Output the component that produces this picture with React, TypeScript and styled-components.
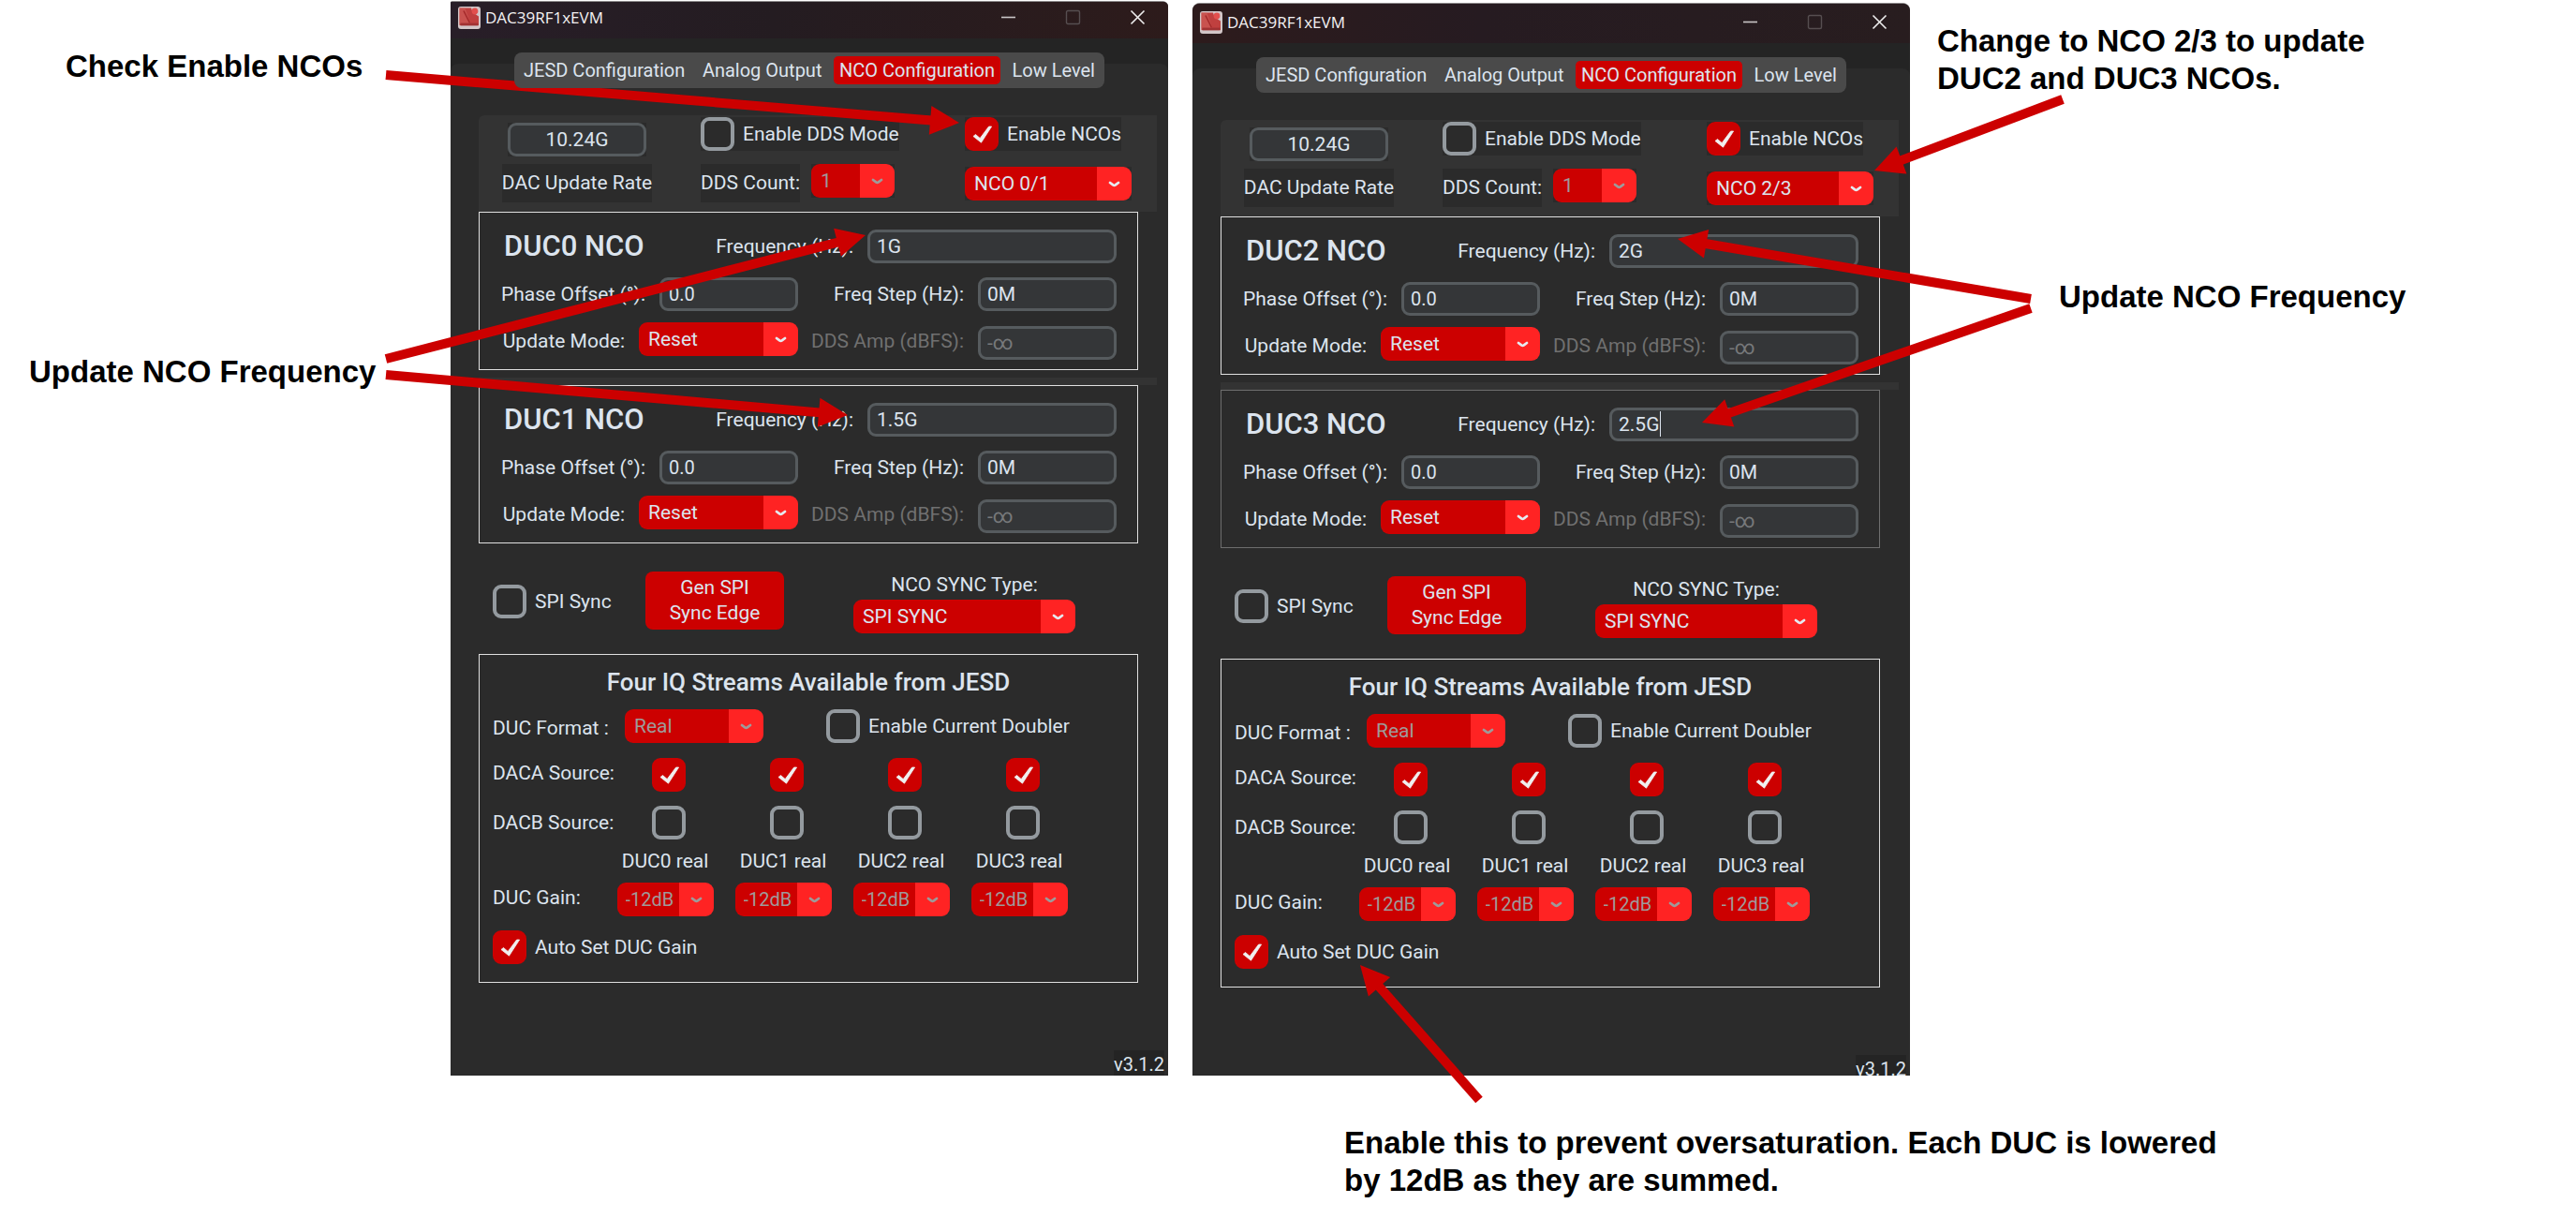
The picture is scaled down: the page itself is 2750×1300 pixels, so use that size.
import React, { useId, useState } from "react";
import styled, { createGlobalStyle, css } from "styled-components";

const colors = {
  root: "#242424",
  panel: "#2b2b2b",
  frame: "#333333",
  segmented: "#4a4a4a",
  text: "#dce4ee",
  dim: "#9f9a9a",
  red: "#cc0000",
  redLight: "#ff2323",
  field: "#343638",
  fieldBorder: "#565b5e",
  tick: "#949a9f",
};

const GlobalStyle = createGlobalStyle`
  *, *::before, *::after { box-sizing: border-box; }
  body { margin: 0; background: #ffffff; }
  input, select, button { font: inherit; color: inherit; margin: 0; }
`;

const Figure = styled.main`
  position: relative;
  display: flex;
  align-items: flex-start;
  min-width: 2500px;
  font-family: Roboto, "Liberation Sans", sans-serif;
  font-size: 21px;
  line-height: 24px;
  color: ${colors.text};
`;

/* ---------- notes ---------- */

const NoteColumn = styled.aside<{ $side: "left" | "right" }>`
  display: flex;
  flex-direction: column;
  ${(p) =>
    p.$side === "left"
      ? css`
          flex: 0 0 481px;
          padding: 51px 0 0 31px;
          gap: 286px;
        `
      : css`
          flex: 1;
          padding: 24px 0 0 29px;
          gap: 193px;
        `}
`;

const Note = styled.p<{ $indent?: number }>`
  margin: 0;
  margin-left: ${(p) => p.$indent ?? 0}px;
  font-family: "Liberation Sans", Arial, sans-serif;
  font-weight: 700;
  font-size: 33px;
  line-height: 40px;
  color: #000000;
  white-space: nowrap;
`;

const Arrows = styled.svg`
  position: absolute;
  top: 0;
  left: 0;
  pointer-events: none;
  overflow: visible;
`;

/* ---------- window ---------- */

const Stack = styled.div`
  display: flex;
  flex-direction: column;
  flex: 0 0 766px;
  padding-top: 1px;

  & + & {
    margin-left: 26px;
    padding-top: 3px;
  }
`;

const StackNote = styled.div`
  padding: 52px 0 0 162px;
  width: 0;
`;

const Window = styled.section<{ $offset: boolean }>`
  background: ${colors.root};
  border-top: 1px solid #8d8a8b;
  border-radius: ${(p) => (p.$offset ? "8px 8px 0 0" : "2px 6px 8px 8px")};
`;

const TitleBar = styled.header<{ $tall: boolean }>`
  display: flex;
  align-items: center;
  height: ${(p) => (p.$tall ? 42 : 39)}px;
  padding: 0 24px ${(p) => (p.$tall ? 3 : 6)}px 8px;
  border-radius: ${(p) => (p.$tall ? "7px 7px" : "1px 5px")} 0 0;
  background: ${(p) =>
    p.$tall
      ? "linear-gradient(90deg, #2d1b1c, #261b21 40%, #281d1f)"
      : "linear-gradient(90deg, #281e28, #241c21 45%, #2d1b1b)"};
`;

const Title = styled.h1`
  margin: 0 auto 0 5px;
  font-family: "Open Sans", "Noto Sans", sans-serif;
  font-weight: 400;
  font-size: 17px;
  line-height: 24px;
  color: #f3f1f2;
`;

const WindowButton = styled.button`
  display: block;
  width: 17px;
  height: 17px;
  margin-left: 52px;
  padding: 0;
  border: 0;
  background: none;

  svg {
    display: block;
  }
`;

const Body = styled.div<{ $short: boolean }>`
  display: flex;
  flex-direction: column;
  min-height: ${(p) => (p.$short ? 1102 : 1107)}px;
  padding-top: 15px;
`;

const Tabs = styled.nav`
  position: relative;
  z-index: 1;
  display: flex;
  justify-content: space-between;
  width: 630px;
  margin: 0 auto;
  padding: 4px;
  border-radius: 8px;
  background: ${colors.segmented};
`;

const Tab = styled.button<{ $active: boolean }>`
  height: 30px;
  padding: 0 6px;
  border: 0;
  border-radius: 5px;
  background: ${(p) => (p.$active ? colors.red : "transparent")};
  color: ${colors.text};
  font-size: 20px;
`;

const Panel = styled.div`
  flex: 1;
  margin-top: -26px;
  padding: 55px 12px 0 30px;
  border-radius: 8px 8px 0 0;
  background: ${colors.panel};
  display: flex;
  flex-direction: column;
`;

const TopFrame = styled.div`
  display: flex;
  height: 103px;
  padding: 2px 0 0 23px;
  border-radius: 6px 0 0 0;
  background: ${colors.frame};
`;

const TopColumn = styled.div<{ $width: number; $gap: number; $top?: number }>`
  display: flex;
  flex-direction: column;
  align-items: ${(p) => (p.$top ? "center" : "flex-start")};
  gap: ${(p) => p.$gap}px;
  flex: 0 0 ${(p) => p.$width}px;
  padding-top: ${(p) => p.$top ?? 0}px;

  & + & {
    margin-left: 50px;
  }
`;

const Plate = styled.div`
  display: flex;
  background: ${colors.panel};
`;

const Caption = styled.label<{ $dim?: boolean }>`
  white-space: nowrap;
  color: ${(p) => (p.$dim ? "#707070" : colors.text)};
`;

const PlateCaption = styled(Caption)`
  height: 41px;
  line-height: 41px;
  background: ${colors.panel};
`;

const DdsRow = styled.div`
  display: flex;
  align-items: flex-start;
  gap: 12px;
`;

const Field = styled.input<{ $width: number; $center?: boolean; $small?: boolean }>`
  display: block;
  width: ${(p) => p.$width}px;
  height: 36px;
  padding: 0 7px;
  border: 3px solid ${colors.fieldBorder};
  border-radius: 9px;
  outline: none;
  background: ${colors.field};
  text-align: ${(p) => (p.$center ? "center" : "left")};
  font-size: ${(p) => (p.$small ? 20 : 21)}px;

  &:disabled {
    color: #77797b;
    opacity: 1;
  }
`;

const FieldBox = styled.div`
  position: relative;
`;

const Caret = styled.span`
  position: absolute;
  top: 4px;
  left: 54px;
  width: 1px;
  height: 27px;
  background: ${colors.text};
`;

const SelectBox = styled.div<{ $width: number }>`
  display: grid;
  width: ${(p) => p.$width}px;

  > * {
    grid-area: 1 / 1;
  }

  > svg {
    align-self: center;
    justify-self: end;
    margin-right: 12px;
    pointer-events: none;
  }
`;

const NativeSelect = styled.select<{ $small: boolean }>`
  appearance: none;
  width: 100%;
  height: 36px;
  padding: 0 0 1px ${(p) => (p.$small ? 9 : 10)}px;
  border: 0;
  border-radius: 9px;
  outline: none;
  background: linear-gradient(
    90deg,
    ${colors.red} calc(100% - 37px),
    ${colors.redLight} calc(100% - 37px)
  );
  font-size: ${(p) => (p.$small ? 20 : 21)}px;

  &:disabled {
    color: ${colors.dim};
    opacity: 1;
  }
`;

const TickLabel = styled.label`
  display: inline-flex;
  align-items: center;
  gap: 9px;
  white-space: nowrap;
`;

const TickBox = styled.span`
  display: grid;
  width: 36px;
  height: 36px;

  > * {
    grid-area: 1 / 1;
  }

  > svg {
    pointer-events: none;
  }
`;

const TickInput = styled.input`
  appearance: none;
  width: 36px;
  height: 36px;
  border: 4px solid ${colors.tick};
  border-radius: 9px;

  &:checked {
    border-color: ${colors.red};
    background: ${colors.red};
  }
`;

const Box = styled.section<{ $faint?: boolean }>`
  margin-right: 20px;
  border: 1px solid ${(p) => (p.$faint ? "#6e6e6e" : "#e0e0e0")};
  background: ${colors.panel};
`;

const NcoBox = styled(Box)`
  display: flex;
  flex-direction: column;
  height: 169px;
  padding: 18px 22px 0 0;
`;

const NcoRow = styled.div<{ $top?: number }>`
  display: flex;
  justify-content: space-between;
  margin-top: ${(p) => p.$top ?? 0}px;
`;

const NcoTitle = styled.h2`
  margin: 0;
  padding-left: 26px;
  font-weight: 500;
  font-size: 31px;
  line-height: 36px;
`;

const Pair = styled.div<{ $align?: "start" | "end" }>`
  display: flex;
  justify-content: flex-end;
  align-items: center;
  gap: 15px;
  width: 340px;
  ${(p) => p.$align && `height: 40px; > :last-child { align-self: flex-${p.$align}; }`}
`;

const WidePair = styled(Pair)`
  width: auto;
`;

const Strip = styled.div`
  height: 8px;
  margin-top: 8px;
  background: ${colors.frame};
`;

const SyncRow = styled.div`
  display: flex;
  align-items: flex-start;
  height: 118px;
  padding: 30px 67px 0 15px;
`;

const SyncTick = styled.div`
  flex: 0 0 163px;
  padding-top: 14px;
`;

const ActionButton = styled.button`
  width: 148px;
  height: 62px;
  padding: 0;
  border: 0;
  border-radius: 8px;
  background: ${colors.red};
  line-height: 27px;
  white-space: pre-line;
`;

const SyncType = styled.div`
  display: flex;
  flex-direction: column;
  align-items: center;
  gap: 4px;
  margin: 0 20px 0 auto;
  padding-top: 2px;
`;

const StreamBox = styled(Box)`
  height: 351px;
  padding: 0 0 0 14px;
`;

const StreamTitle = styled.h2`
  margin: 0 14px 0 0;
  font-weight: 500;
  font-size: 26px;
  line-height: 58px;
  text-align: center;
`;

const FormatRow = styled.div`
  display: flex;
  align-items: center;
  height: 36px;
`;

const FormatLabel = styled.div`
  flex: 0 0 141px;
  padding-top: 4px;
`;

const FormatSelect = styled.div`
  flex: 0 0 215px;
`;

const SourceGrid = styled.div`
  display: grid;
  grid-template-columns: 121px repeat(4, 126px);
  grid-template-rows: 36px 15px 36px 46px 36px;
  margin: 16px 0 15px;
`;

const GridGap = styled.div`
  grid-column: 1 / -1;
`;

const RowLabel = styled.span<{ $raised?: boolean }>`
  align-self: center;
  padding-bottom: ${(p) => (p.$raised ? 5 : 0)}px;
  white-space: nowrap;
`;

const Cell = styled.div<{ $tick?: boolean }>`
  display: flex;
  justify-content: center;
  align-items: center;
  padding-left: ${(p) => (p.$tick ? 8 : 0)}px;
`;

const Version = styled.footer<{ $short: boolean }>`
  align-self: flex-end;
  height: ${(p) => (p.$short ? 22 : 27)}px;
  margin: auto -8px 0 0;
  font-size: 20px;
  line-height: 31px;
  background: ${colors.root};
`;

/* ---------- parts ---------- */

function AppIcon() {
  return (
    <svg width="24" height="24" viewBox="0 0 24 24" aria-hidden="true">
      <rect width="24" height="24" rx="3" fill="#d2c6c8" />
      <path d="M1.5 1.5h12.5l1.5 4.5 6.5 4.5V20H1.5z" fill="#c0403f" />
      <path d="M1.5 1.5h6l6 17H1.5z" fill="#d0605d" opacity="0.55" />
      <path d="M6 4.5l6.5 13" stroke="#a52a2b" strokeWidth="1.6" />
      <path d="M2.5 17.6h19v2.8h-19z" fill="#a13233" />
      <circle cx="18" cy="5" r="3.4" fill="#e2504e" />
    </svg>
  );
}

function Chevron({ dim }: { dim?: boolean }) {
  return (
    <svg width="13" height="7" viewBox="0 0 13 7" aria-hidden="true">
      <path
        d="M2 2 5.2 4.4Q6.5 5.2 7.8 4.4L11 2"
        fill="none"
        stroke={dim ? colors.dim : "#e6eaf0"}
        strokeWidth="2.8"
        strokeLinecap="round"
        strokeLinejoin="round"
      />
    </svg>
  );
}

interface SelectProps {
  id?: string;
  label?: string;
  width: number;
  options: string[];
  value?: string;
  disabled?: boolean;
  small?: boolean;
}

function Select({ id, label, width, options, value, disabled, small }: SelectProps) {
  return (
    <SelectBox $width={width}>
      <NativeSelect
        id={id}
        aria-label={label}
        defaultValue={value ?? options[0]}
        disabled={disabled}
        $small={!!small}
      >
        {options.map((o) => (
          <option key={o}>{o}</option>
        ))}
      </NativeSelect>
      <Chevron dim={disabled} />
    </SelectBox>
  );
}

function Tick({ text, label, initial = false }: { text?: string; label?: string; initial?: boolean }) {
  const [on, setOn] = useState(initial);
  return (
    <TickLabel>
      <TickBox>
        <TickInput
          type="checkbox"
          aria-label={label}
          checked={on}
          onChange={(e) => setOn(e.target.checked)}
        />
        {on && (
          <svg width="36" height="36" viewBox="0 0 36 36" aria-hidden="true">
            <path
              d="M9 20.5 11.5 18.5 16.2 22.6 25.6 10 28.6 10 17.5 27.2z"
              fill="#f0f0f0"
              stroke="#f0f0f0"
              strokeWidth="0.8"
              strokeLinejoin="round"
            />
          </svg>
        )}
      </TickBox>
      {text}
    </TickLabel>
  );
}

interface NcoProps {
  index: number;
  frequency: string;
  editing?: boolean;
  faint?: boolean;
}

function Nco({ index, frequency, editing, faint }: NcoProps) {
  const id = useId();
  return (
    <NcoBox $faint={faint}>
      <NcoRow>
        <NcoTitle>DUC{index} NCO</NcoTitle>
        <WidePair>
          <Caption htmlFor={id + "f"}>Frequency (Hz):</Caption>
          <FieldBox>
            <Field id={id + "f"} $width={266} defaultValue={frequency} />
            {editing && <Caret />}
          </FieldBox>
        </WidePair>
      </NcoRow>
      <NcoRow $top={15}>
        <Pair>
          <Caption htmlFor={id + "p"}>Phase Offset (°):</Caption>
          <Field id={id + "p"} $width={148} $small defaultValue="0.0" />
        </Pair>
        <Pair>
          <Caption htmlFor={id + "s"}>Freq Step (Hz):</Caption>
          <Field id={id + "s"} $width={148} defaultValue="0M" />
        </Pair>
      </NcoRow>
      <NcoRow $top={12}>
        <Pair $align="start">
          <Caption htmlFor={id + "u"}>Update Mode:</Caption>
          <Select id={id + "u"} width={170} options={["Reset", "Continuous"]} />
        </Pair>
        <Pair $align="end">
          <Caption htmlFor={id + "a"} $dim>
            DDS Amp (dBFS):
          </Caption>
          <Field id={id + "a"} $width={148} defaultValue="-∞" disabled />
        </Pair>
      </NcoRow>
    </NcoBox>
  );
}

const tabs = ["JESD Configuration", "Analog Output", "NCO Configuration", "Low Level"];
const streams = [0, 1, 2, 3];

interface EvmProps {
  pair: string;
  ncos: NcoProps[];
  offset?: boolean;
}

function EvmWindow({ pair, ncos, offset = false }: EvmProps) {
  const id = useId();
  return (
    <Window $offset={offset}>
      <TitleBar $tall={offset}>
        <AppIcon />
        <Title>DAC39RF1xEVM</Title>
        <WindowButton aria-label="Minimize">
          <svg width="17" height="17" viewBox="0 0 17 17">
            <path d="M1 8.5h15" stroke="#c9c6c7" strokeWidth="1.6" />
          </svg>
        </WindowButton>
        <WindowButton aria-label="Maximize" disabled>
          <svg width="17" height="17" viewBox="0 0 17 17">
            <rect x="1.5" y="1.5" width="14" height="14" rx="1.5" fill="none" stroke="#564e50" strokeWidth="1.4" />
          </svg>
        </WindowButton>
        <WindowButton aria-label="Close">
          <svg width="17" height="17" viewBox="0 0 17 17">
            <path d="M1.5 1.5l14 14M15.5 1.5l-14 14" stroke="#efeeee" strokeWidth="1.6" />
          </svg>
        </WindowButton>
      </TitleBar>
      <Body $short={offset}>
        <Tabs>
          {tabs.map((t, i) => (
            <Tab key={t} $active={i === 2}>
              {t}
            </Tab>
          ))}
        </Tabs>
        <Panel>
          <TopFrame>
            <TopColumn $width={164} $gap={8} $top={6}>
              <Plate>
                <Field id={id + "rate"} $width={148} $center defaultValue="10.24G" />
              </Plate>
              <PlateCaption htmlFor={id + "rate"}>DAC Update Rate</PlateCaption>
            </TopColumn>
            <TopColumn $width={232} $gap={14}>
              <Plate>
                <Tick text="Enable DDS Mode" />
              </Plate>
              <DdsRow>
                <PlateCaption htmlFor={id + "dds"}>DDS Count:</PlateCaption>
                <Plate>
                  <Select id={id + "dds"} width={89} options={["1", "2", "4"]} disabled />
                </Plate>
              </DdsRow>
            </TopColumn>
            <TopColumn $width={178} $gap={17}>
              <Plate>
                <Tick text="Enable NCOs" initial />
              </Plate>
              <Plate>
                <Select label="NCO pair" width={178} options={["NCO 0/1", "NCO 2/3"]} value={pair} />
              </Plate>
            </TopColumn>
          </TopFrame>
          <Nco {...ncos[0]} />
          <Strip />
          <Nco {...ncos[1]} />
          <SyncRow>
            <SyncTick>
              <Tick text="SPI Sync" />
            </SyncTick>
            <ActionButton>{"Gen SPI\nSync Edge"}</ActionButton>
            <SyncType>
              <Caption htmlFor={id + "sync"}>NCO SYNC Type:</Caption>
              <Select id={id + "sync"} width={237} options={["SPI SYNC", "SYSREF"]} />
            </SyncType>
          </SyncRow>
          <StreamBox>
            <StreamTitle>Four IQ Streams Available from JESD</StreamTitle>
            <FormatRow>
              <FormatLabel>
                <Caption htmlFor={id + "fmt"}>DUC Format :</Caption>
              </FormatLabel>
              <FormatSelect>
                <Select id={id + "fmt"} width={148} options={["Real", "Complex"]} disabled />
              </FormatSelect>
              <Tick text="Enable Current Doubler" />
            </FormatRow>
            <SourceGrid>
              <RowLabel $raised>DACA Source:</RowLabel>
              {streams.map((n) => (
                <Cell key={n} $tick>
                  <Tick label={`DACA source DUC${n}`} initial />
                </Cell>
              ))}
              <GridGap />
              <RowLabel>DACB Source:</RowLabel>
              {streams.map((n) => (
                <Cell key={n} $tick>
                  <Tick label={`DACB source DUC${n}`} />
                </Cell>
              ))}
              <span />
              {streams.map((n) => (
                <Cell key={n}>DUC{n} real</Cell>
              ))}
              <RowLabel $raised>DUC Gain:</RowLabel>
              {streams.map((n) => (
                <Cell key={n}>
                  <Select label={`DUC${n} gain`} width={103} options={["-12dB", "0dB"]} disabled small />
                </Cell>
              ))}
            </SourceGrid>
            <Tick text="Auto Set DUC Gain" initial />
          </StreamBox>
          <Version $short={offset}>v3.1.2</Version>
        </Panel>
      </Body>
    </Window>
  );
}

const arrows: [number, number, number, number][] = [
  [412, 80, 1024, 131],
  [412, 383, 924, 251],
  [412, 400, 905, 443],
  [2202, 106, 2001, 182],
  [2168, 319, 1791, 255],
  [2168, 329, 1817, 451],
  [1579, 1174, 1452, 1030],
];

function Arrow({ x1, y1, x2, y2 }: { x1: number; y1: number; x2: number; y2: number }) {
  const length = Math.hypot(x2 - x1, y2 - y1);
  const ux = (x2 - x1) / length;
  const uy = (y2 - y1) / length;
  const bx = x2 - ux * 31;
  const by = y2 - uy * 31;
  return (
    <g>
      <line x1={x1} y1={y1} x2={bx + ux} y2={by + uy} stroke={colors.red} strokeWidth="10" />
      <polygon
        fill={colors.red}
        points={`${x2},${y2} ${bx - uy * 15.5},${by + ux * 15.5} ${bx + uy * 15.5},${by - ux * 15.5}`}
      />
    </g>
  );
}

export default function App() {
  return (
    <>
      <GlobalStyle />
      <Figure>
        <NoteColumn $side="left">
          <Note $indent={39}>Check Enable NCOs</Note>
          <Note>Update NCO Frequency</Note>
        </NoteColumn>
        <Stack>
          <EvmWindow
            pair="NCO 0/1"
            ncos={[
              { index: 0, frequency: "1G" },
              { index: 1, frequency: "1.5G" },
            ]}
          />
        </Stack>
        <Stack>
          <EvmWindow
            pair="NCO 2/3"
            offset
            ncos={[
              { index: 2, frequency: "2G" },
              { index: 3, frequency: "2.5G", editing: true, faint: true },
            ]}
          />
          <StackNote>
            <Note>
              Enable this to prevent oversaturation. Each DUC is lowered
              <br />
              by 12dB as they are summed.
            </Note>
          </StackNote>
        </Stack>
        <NoteColumn $side="right">
          <Note>
            Change to NCO 2/3 to update
            <br />
            DUC2 and DUC3 NCOs.
          </Note>
          <Note $indent={130}>Update NCO Frequency</Note>
        </NoteColumn>
        <Arrows width="100%" height="100%">
          {arrows.map(([x1, y1, x2, y2]) => (
            <Arrow key={`${x1}-${y1}`} x1={x1} y1={y1} x2={x2} y2={y2} />
          ))}
        </Arrows>
      </Figure>
    </>
  );
}
